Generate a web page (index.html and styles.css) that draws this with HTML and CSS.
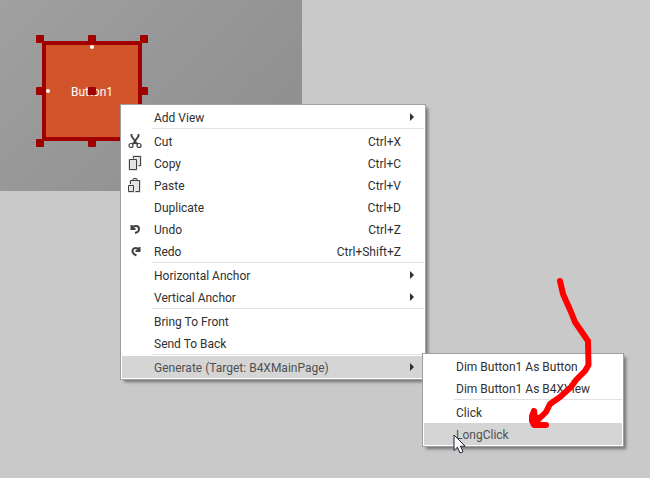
FILE: index.html
```html
<!DOCTYPE html>
<html lang="en">
<head>
  <meta charset="UTF-8" />
  <meta name="viewport" content="width=device-width, initial-scale=1.0"/>
  <title>Designer</title>
  <link rel="stylesheet" href="styles.css">
</head>
<body>

  <main class="designer">
    <div class="form">
      <div class="selection">
        <button class="view" type="button">Button1</button>
        <span class="anchor anchor-top"></span>
        <span class="anchor anchor-left"></span>
        <div class="handles">
          <i></i><i></i><i></i>
          <i></i><i></i><i></i>
          <i></i><i></i><i></i>
        </div>
      </div>
    </div>

    <div class="menu main-menu" role="menu">
      <button class="item" role="menuitem"><span class="icon"></span><span class="label">Add View</span><span class="arrow"></span></button>
      <hr>
      <button class="item" role="menuitem">
        <span class="icon"><svg width="14" height="16" viewBox="0 0 14 16" fill="none" stroke="#404040">
          <path d="M3.500 1v2l5.500 8M10.500 1v2l-5.500 8" stroke-width="1.800"/>
          <circle cx="3" cy="12.500" r="2" stroke-width="1.200"/>
          <circle cx="11" cy="12.500" r="2" stroke-width="1.200"/>
          <path d="M3.500 10.500h7" stroke-width="1.200"/>
        </svg></span>
        <span class="label">Cut</span><kbd>Ctrl+X</kbd>
      </button>
      <button class="item" role="menuitem">
        <span class="icon"><svg width="14" height="16" viewBox="0 0 14 16">
          <path d="M4 0h10v12h-4v4h-10v-12h4z" fill="#e4e4e4"/>
          <path d="M5.500 3.500v-2h7v9h-2M1.500 4.500h7v10h-7z" fill="none" stroke="#404040"/>
        </svg></span>
        <span class="label">Copy</span><kbd>Ctrl+C</kbd>
      </button>
      <button class="item" role="menuitem">
        <span class="icon"><svg width="14" height="16" viewBox="0 0 14 16">
          <path d="M1 3h3l1-2h4l1 2h3v13h-13v-8h1z" fill="#e4e4e4"/>
          <path d="M2.500 7v-3.500h9v11h-4M4.500 3.500l1-2h3l1 2M.5 8.500h5v6h-5z" fill="none" stroke="#404040"/>
          <path d="M4 3h6v1h-6z" fill="#404040"/>
        </svg></span>
        <span class="label">Paste</span><kbd>Ctrl+V</kbd>
      </button>
      <button class="item" role="menuitem"><span class="icon"></span><span class="label">Duplicate</span><kbd>Ctrl+D</kbd></button>
      <button class="item" role="menuitem">
        <span class="icon"><svg width="14" height="16" viewBox="0 0 14 16" fill="none" stroke="#404040" stroke-width="2">
          <path d="M3.500 4v4h4M4 7.500c1.500-3.500 7-3.500 7 .5c0 2-1.500 3.500-4 4"/>
        </svg></span>
        <span class="label">Undo</span><kbd>Ctrl+Z</kbd>
      </button>
      <button class="item" role="menuitem">
        <span class="icon"><svg width="14" height="16" viewBox="0 0 14 16" fill="none" stroke="#404040" stroke-width="2">
          <path d="M11.500 4v4h-4M11 7.500c-1.500-3.500-6.500-3-6.500 .5c0 2 1.500 3.500 4 4.500"/>
        </svg></span>
        <span class="label">Redo</span><kbd>Ctrl+Shift+Z</kbd>
      </button>
      <hr>
      <button class="item" role="menuitem"><span class="icon"></span><span class="label">Horizontal Anchor</span><span class="arrow"></span></button>
      <button class="item" role="menuitem"><span class="icon"></span><span class="label">Vertical Anchor</span><span class="arrow"></span></button>
      <hr>
      <button class="item" role="menuitem"><span class="icon"></span><span class="label">Bring To Front</span></button>
      <button class="item" role="menuitem"><span class="icon"></span><span class="label">Send To Back</span></button>
      <hr>
      <button class="item active" role="menuitem"><span class="icon"></span><span class="label">Generate (Target: B4XMainPage)</span><span class="arrow"></span></button>

      <div class="menu sub-menu" role="menu">
        <button class="item" role="menuitem"><span class="icon"></span><span class="label">Dim Button1 As Button</span></button>
        <button class="item" role="menuitem"><span class="icon"></span><span class="label">Dim Button1 As B4XView</span></button>
        <hr>
        <button class="item" role="menuitem"><span class="icon"></span><span class="label">Click</span></button>
        <button class="item active" role="menuitem"><span class="icon"></span><span class="label">LongClick</span></button>
      </div>
    </div>

    <!-- hand drawn arrow -->
    <svg class="scribble" width="70" height="156" viewBox="525 275 70 156">
      <path d="M560 281L563 294L571 312L575 322L588 341L588.500 365L585 371L576 380L571 387L560 397L550 404L546 412L541 417L534 420M534 411L532 416L532 421L534 425L546 425M534 411L535 418L539 419"/>
    </svg>

    <svg class="cursor" width="14" height="21" viewBox="0 0 14 21">
      <path d="M1 1v15.500l3.500-3.300l2.500 5.800l3-1.300l-2.500-5.500h4.700z"/>
    </svg>
  </main>

</body>
</html>
```
FILE: styles.css
```css
* {
  box-sizing: border-box;
}

body {
  margin: 0;
  background: #c9c9c9;
  font-family: Roboto, "Open Sans", sans-serif;
  font-size: 12px;
}

.designer {
  position: relative;
  min-height: 100vh;
  overflow: hidden;
}

.form {
  position: relative;
  width: 302px;
  height: 191px;
  background: linear-gradient(135deg, #a0a0a0, #8c8c8c);
}

/* selected view */
.selection {
  position: absolute;
  left: 36px;
  top: 35px;
  width: 112px;
  height: 112px;
  padding: 6px;
}

.view {
  width: 100%;
  height: 100%;
  padding: 2px 0 0;
  border: 4px solid #a00000;
  background: #d2542b;
  color: #fff;
  font: inherit;
}

.handles {
  position: absolute;
  inset: 0;
  display: grid;
  grid-template-columns: repeat(3, 8px);
  grid-template-rows: repeat(3, 8px);
  justify-content: space-between;
  align-content: space-between;
}

.handles i {
  background: #a00000;
  border-radius: 1px;
}

.anchor {
  position: absolute;
  width: 4px;
  height: 4px;
  border-radius: 50%;
  background: #fff;
}

.anchor-top {
  left: 54px;
  top: 10px;
}

.anchor-left {
  left: 10px;
  top: 54px;
}

/* context menus */
.menu {
  position: absolute;
  padding: 1px;
  border: 1px solid #a0a0a4;
  background: #fff;
  box-shadow: 3px 3px 3px -1px #707070;
}

.main-menu {
  left: 120px;
  top: 104px;
  width: 306px;
}

.sub-menu {
  left: 301px;
  bottom: -68px;
  width: 202px;
}

.menu hr {
  height: 1px;
  margin: 0 0 1px 30px;
  border: 0;
  background: #e0e0e0;
}

.item {
  display: flex;
  align-items: center;
  width: 100%;
  height: 22px;
  padding: 0 10px 0 6px;
  border: 0;
  background: none;
  color: #303030;
  font: inherit;
  text-align: left;
  white-space: nowrap;
}

.item.active {
  background: #d5d5d5;
  color: #505050;
}

.icon {
  display: flex;
  width: 26px;
}

.label {
  flex: 1;
  padding-top: 2px;
}

.item kbd {
  padding: 2px 13px 0 0;
  font: inherit;
}

.arrow {
  border: 4px solid transparent;
  border-left-color: #303030;
  border-right: 0;
}

.scribble {
  position: absolute;
  left: 525px;
  top: 275px;
  fill: none;
  stroke: #ff0000;
  stroke-width: 6px;
  stroke-linecap: round;
  stroke-linejoin: round;
}

.cursor {
  position: absolute;
  left: 453px;
  top: 434px;
  fill: #fff;
  stroke: #202030;
}
```
